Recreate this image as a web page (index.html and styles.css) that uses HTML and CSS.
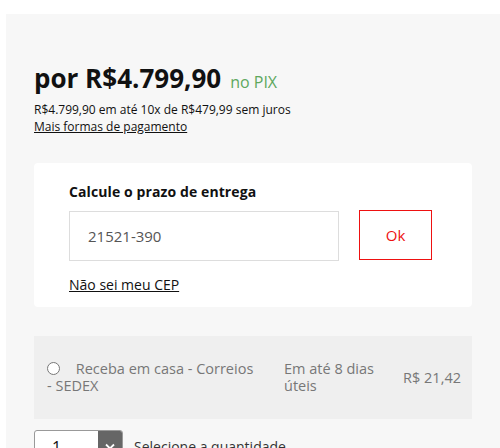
FILE: index.html
```html
<!DOCTYPE html>
<html lang="pt-BR">
<head>
    <meta charset="UTF-8">
    <meta name="viewport" content="width=device-width, initial-scale=1.0">
    <title>Produto - Entrega</title>
    <link rel="stylesheet" href="styles.css">
</head>
<body>
    <div id="buybox">
        <div class="price">
            <div class="price-main">
                <span class="price-value">por R$4.799,90</span>
                <span class="price-pix">no PIX</span>
            </div>
            <p class="price-install">R$4.799,90 em até 10x de R$479,99 sem juros</p>
            <a href="#" class="price-more">Mais formas de pagamento</a>
        </div>

        <div class="shipping-card">
            <h3>Calcule o prazo de entrega</h3>
            <form class="cep-form">
                <input type="text" class="cep-input" value="21521-390">
                <button type="button" class="cep-btn">Ok</button>
            </form>
            <a href="#" class="cep-help">Não sei meu CEP</a>
        </div>

        <label class="ship-option">
            <span class="ship-name"><input type="radio" name="frete"> Receba em casa - Correios - SEDEX</span>
            <span class="ship-time">Em até 8 dias úteis</span>
            <span class="ship-price">R$ 21,42</span>
        </label>

        <div class="qty">
            <div class="qty-select">
                <span class="qty-value">1</span>
                <span class="qty-arrow">
                    <svg width="10" height="7" viewBox="0 0 10 7"><path d="M1 1.5l4 4 4-4" fill="none" stroke="#fff" stroke-width="1.8"/></svg>
                </span>
            </div>
            <span class="qty-label">Selecione a quantidade</span>
        </div>
    </div>
</body>
</html>
```

FILE: styles.css
```css
body {
    margin: 0;
    background-color: #ffffff;
    font-family: "Open Sans", Arial, sans-serif;
    color: #111111;
}

#buybox {
    margin: 14px 0 0 6px;
    padding: 48px 28px 0 28px;
    background-color: #f7f7f7;
    height: 500px;
}

.price-main {
    display: flex;
    align-items: baseline;
    gap: 9px;
    line-height: 32px;
}

.price-value {
    font-size: 26px;
    font-weight: 700;
}

.price-pix {
    font-size: 16px;
    color: #5ea85e;
}

.price-install {
    margin: 3px 0 0 0;
    font-size: 12px;
    line-height: 17px;
}

.price-more {
    display: block;
    width: fit-content;
    font-size: 12px;
    line-height: 17px;
    color: #111111;
}

.shipping-card {
    margin-top: 28px;
    background-color: #ffffff;
    border-radius: 4px;
    padding: 19px 40px 12px 35px;
}

.shipping-card h3 {
    margin: 0 0 10px 0;
    font-size: 14px;
    font-weight: 700;
    letter-spacing: 0.1px;
}

.cep-form {
    display: flex;
    gap: 20px;
    align-items: flex-start;
}

.cep-input {
    width: 270px;
    height: 50px;
    box-sizing: border-box;
    border: 1px solid #dddddd;
    padding: 0 18px;
    font-family: "Open Sans", Arial, sans-serif;
    font-size: 15px;
    color: #555555;
    background: #ffffff;
}

.cep-btn {
    width: 73px;
    height: 50px;
    margin-top: -1px;
    border: 1px solid #ee1111;
    background: #ffffff;
    color: #ee1111;
    font-family: "Open Sans", Arial, sans-serif;
    font-size: 15px;
    cursor: pointer;
}

.cep-help {
    display: inline-block;
    margin-top: 14px;
    font-size: 14px;
    color: #111111;
}

.ship-option {
    margin-top: 29px;
    display: grid;
    grid-template-columns: 225px 106px 1fr;
    column-gap: 12px;
    align-items: center;
    background-color: #efefef;
    padding: 24px 11px 25px 13px;
    font-size: 14.5px;
    line-height: 17px;
    color: #777777;
}

.ship-name {
    padding-right: 15px;
}

.ship-name input {
    margin: 0 12px 0 0;
    width: 13px;
    height: 13px;
    vertical-align: -1px;
}

.ship-price {
    text-align: right;
    white-space: nowrap;
}

.qty {
    margin-top: 11px;
    display: flex;
    align-items: flex-start;
    gap: 11px;
}

.qty-select {
    display: flex;
    width: 87px;
    height: 30px;
    border: 1px solid #999999;
    border-radius: 3px;
    overflow: hidden;
    background: #ffffff;
}

.qty-value {
    flex: 1;
    padding: 5px 0 0 17px;
    font-size: 16px;
}

.qty-arrow {
    width: 24px;
    background-color: #666666;
    display: flex;
    justify-content: center;
    align-items: center;
}

.qty-label {
    padding-top: 7px;
    font-size: 14px;
    color: #333333;
}
```
